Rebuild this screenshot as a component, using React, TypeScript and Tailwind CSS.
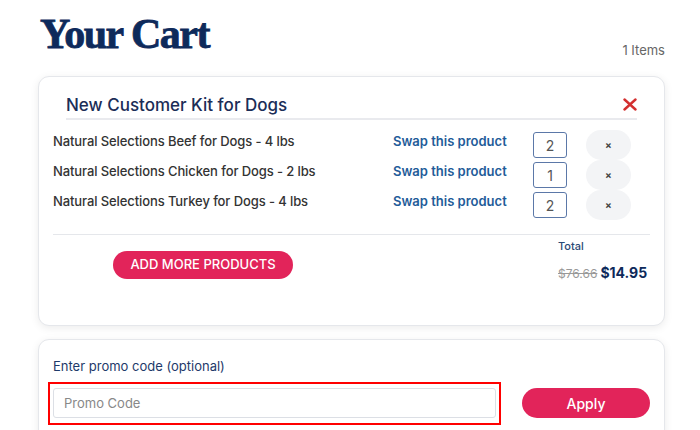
import React from 'react';

const items = [
    { name: 'Natural Selections Beef for Dogs - 4 lbs', qty: 2 },
    { name: 'Natural Selections Chicken for Dogs - 2 lbs', qty: 1 },
    { name: 'Natural Selections Turkey for Dogs - 4 lbs', qty: 2 },
];

const sans = { fontFamily: 'Inter, "Noto Sans", sans-serif' };

export default function App() {
    return (
        <div className="min-h-[430px] bg-white pl-[38px] pr-[35px] pt-[10px]" style={sans}>
            {/* title */}
            <div className="flex items-end justify-between">
                <h1
                    className="pl-[2px] text-[42px] font-bold leading-[48px] tracking-[-1.5px] text-[#0e2a5b] [-webkit-text-stroke:0.8px_#0e2a5b]"
                    style={{ fontFamily: '"Liberation Serif", serif' }}
                >
                    Your Cart
                </h1>
                <span className="mb-[-2px] text-[13px] leading-5 text-[#666]">1 Items</span>
            </div>

            {/* kit card */}
            <div className="mt-[18px] h-[250px] rounded-[11px] border border-[#e5e7eb] bg-white px-[14px] pt-[16px] shadow-[0_2px_8px_rgba(0,0,0,0.08)]">
                <div className="mx-[13px] flex items-center justify-between border-b-2 border-[#e9eaee] pb-[1px]">
                    <h2 className="text-[17px] font-medium leading-[24px] text-[#1b2d57]">New Customer Kit for Dogs</h2>
                    <button className="mb-[2px] text-[#d32f2f]">
                        <svg width="14" height="13" viewBox="0 0 14 13" fill="none" stroke="currentColor" strokeWidth="2.4" strokeLinecap="round">
                            <path d="M1.5 1.5 L12.5 11.5 M12.5 1.5 L1.5 11.5" />
                        </svg>
                    </button>
                </div>

                <div className="mt-[10px]">
                    {items.map((item, i) => (
                        <div key={i} className="grid h-[30px] grid-cols-[340px_140px_34px_45px] items-start">
                            <div className="mt-[1px] text-[13px] font-medium leading-5 tracking-[-0.1px] text-[#333]">{item.name}</div>
                            <a className="mt-[1px] text-[13px] font-semibold leading-5 text-[#1f5c99]">Swap this product</a>
                            <div className="mt-[2px] flex h-[26px] w-[34px] items-center justify-center rounded-[3px] border border-[#5b78a8] text-[14px] text-[#555]">
                                {item.qty}
                            </div>
                            <button className="ml-[19px] flex h-[30px] w-[45px] items-center justify-center rounded-full bg-[#f3f4f6] text-[10px] font-bold text-[#444]">
                                ×
                            </button>
                        </div>
                    ))}
                </div>

                <div className="mt-[14px] border-t border-[#e5e7eb]" />

                <div className="flex">
                    <div className="w-[505px] pl-[60px] pt-[16px]">
                        <button className="h-[28px] w-[180px] rounded-full bg-[#e2245a] text-[13px] font-medium text-white">
                            ADD MORE PRODUCTS
                        </button>
                    </div>
                    <div className="pt-[3px]">
                        <div className="text-[11px] font-medium leading-4 text-[#2b4a75]">Total</div>
                        <div className="mt-[8px] flex items-baseline gap-[3px]">
                            <span className="text-[12px] text-[#999] line-through">$76.66</span>
                            <span className="text-[14px] font-bold text-[#0e2a5b]">$14.95</span>
                        </div>
                    </div>
                </div>
            </div>

            {/* promo card */}
            <div className="mt-[13px] h-[120px] rounded-[11px] border border-[#e5e7eb] bg-white px-[14px] pt-[16px] shadow-[0_2px_8px_rgba(0,0,0,0.08)]">
                <label className="block text-[13px] leading-5 text-[#1e3a6a]">Enter promo code (optional)</label>
                <div className="mt-[12px] flex items-center gap-[26px]">
                    <div className="relative">
                        <input
                            placeholder="Promo Code"
                            className="block h-[30px] w-[443px] rounded-[3px] border border-[#dcdfe5] px-[10px] text-[13px] text-[#333] outline-none placeholder:text-[#888]"
                        />
                        {/* highlight frame */}
                        <span className="pointer-events-none absolute -inset-x-[5px] -bottom-[7px] -top-[6px] border-2 border-[#ff0000]" />
                    </div>
                    <button className="h-[30px] w-[130px] rounded-full bg-[#e2245a] text-[14px] font-medium text-white">
                        Apply
                    </button>
                </div>
            </div>
        </div>
    );
}
